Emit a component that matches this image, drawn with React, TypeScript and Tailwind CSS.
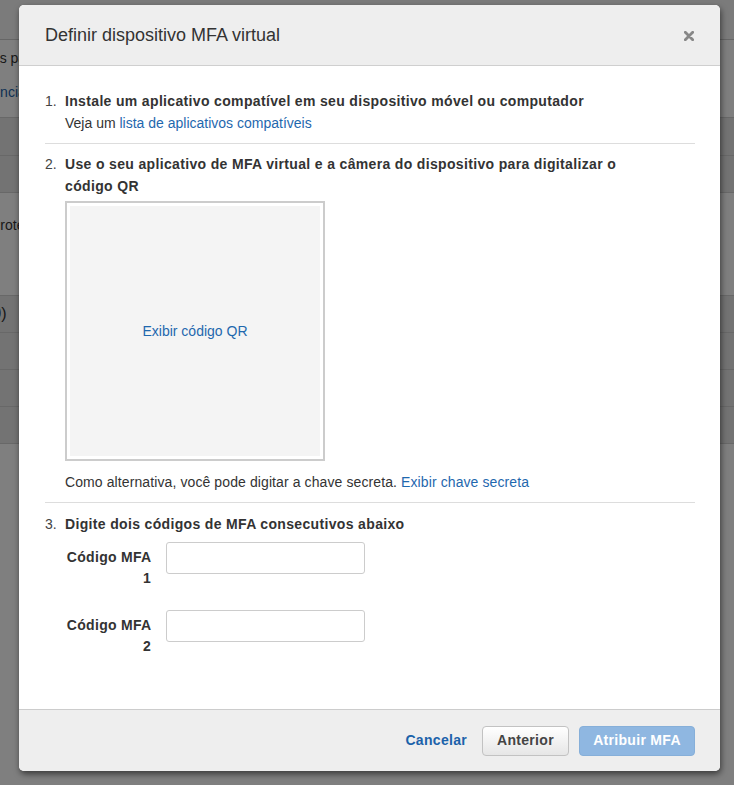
import React from "react";

const font = { fontFamily: '"Liberation Sans", Arial, Helvetica, sans-serif' };

function BgRow({ h, dark, children }: { h: string; dark?: boolean; children?: React.ReactNode }) {
  return (
    <div className={`${h} border-b border-[#d0d0d0] ${dark ? "bg-[#e6e6e6]" : "bg-white"} overflow-hidden`}>
      {children}
    </div>
  );
}

function Background() {
  return (
    <div className="bg-white w-full h-full">
      <div className="h-[40px] border-b border-[#cccccc] bg-[#f6f6f6]" />
      <div className="h-[78px] border-b border-[#d0d0d0] bg-white overflow-hidden">
        <div className="pt-[8px] text-[14px] leading-[20px] text-[#333] whitespace-nowrap -ml-[68px]">Dispositivos para</div>
        <div className="pt-[14px] text-[14px] leading-[20px] text-[#1a5fa8] whitespace-nowrap -ml-[31px]">Gerência</div>
      </div>
      <BgRow h="h-[38px]" dark />
      <BgRow h="h-[37px]" dark />
      <div className="h-[103px] border-b border-[#d0d0d0] bg-white overflow-hidden">
        <div className="pt-[22px] text-[14px] leading-[20px] text-[#333] whitespace-nowrap -ml-[9px]">Proteção</div>
      </div>
      <div className="h-[37px] border-b border-[#d0d0d0] bg-[#e6e6e6] overflow-hidden">
        <div className="pt-[8px] text-[16px] leading-[20px] text-[#333] whitespace-nowrap -ml-[13px]">(0)</div>
      </div>
      <BgRow h="h-[37px]" dark />
      <BgRow h="h-[37px]" dark />
      <BgRow h="h-[37px]" dark />
    </div>
  );
}

function Step({ n, children }: { n: string; children: React.ReactNode }) {
  return (
    <div className="flex">
      <div className="w-[20px] shrink-0 text-[14px] leading-[22px] text-[#444]">{n}</div>
      <div className="flex-1 min-w-0">{children}</div>
    </div>
  );
}

function MfaRow({ label, num, className }: { label: string; num: string; className?: string }) {
  return (
    <div className={`flex items-start ${className ?? ""}`}>
      <label className="w-[86px] shrink-0 pt-[5px] text-right text-[14px] leading-[21px] font-bold tracking-[0.3px] text-[#333]">
        {label} {num}
      </label>
      <input
        type="text"
        className="ml-[15px] w-[199px] h-[32px] rounded-[3px] border border-[#cccccc] bg-white outline-none"
      />
    </div>
  );
}

export default function App() {
  return (
    <div className="relative w-full h-[785px] overflow-hidden" style={font}>
      <Background />
      <div className="absolute inset-0 bg-black/50 pl-[19px] pt-[5px]">
        <div className="w-[701px] rounded-[5px] overflow-hidden bg-white shadow-[1px_3px_6px_rgba(0,0,0,0.55)]">
          {/* Header */}
          <div className="h-[61px] border-b border-[#cfcfcf] bg-[#eeeeee] flex items-center justify-between pl-[26px] pr-[26px]">
            <h2 className="text-[18px] leading-[24px] text-[#333] font-normal">Definir dispositivo MFA virtual</h2>
            <svg width="10" height="10" viewBox="0 0 10 10" className="mt-[1px]">
              <path d="M1.3 1.3 L8.7 8.7 M8.7 1.3 L1.3 8.7" stroke="#878787" strokeWidth="2.8" strokeLinecap="round" />
            </svg>
          </div>

          {/* Body */}
          <div className="pl-[26px] pr-[25px] pt-[24px] pb-[52px] text-[14px] text-[#333]">
            <div className="pb-[9px] border-b border-[#dddddd]">
              <Step n="1.">
                <p className="font-bold leading-[22px] tracking-[0.34px]">Instale um aplicativo compatível em seu dispositivo móvel ou computador</p>
                <p className="leading-[22px]">
                  Veja um <a className="text-[#1f68ae]">lista de aplicativos compatíveis</a>
                </p>
              </Step>
            </div>

            <div className="pt-[9px] pb-[9px] border-b border-[#dddddd]">
              <Step n="2.">
                <p className="font-bold leading-[22px] tracking-[0.34px] max-w-[580px]">
                  Use o seu aplicativo de MFA virtual e a câmera do dispositivo para digitalizar o código QR
                </p>
                <div className="mt-[4px] w-[260px] h-[260px] border-2 border-[#cccccc] bg-white p-[3px]">
                  <div className="w-full h-full bg-[#f4f4f4] flex items-center justify-center">
                    <a className="text-[#1f68ae] leading-[22px]">Exibir código QR</a>
                  </div>
                </div>
                <p className="mt-[10px] leading-[22px] tracking-[0.1px]">
                  Como alternativa, você pode digitar a chave secreta. <a className="text-[#1f68ae]">Exibir chave secreta</a>
                </p>
              </Step>
            </div>

            <div className="pt-[10px]">
              <Step n="3.">
                <p className="font-bold leading-[22px] tracking-[0.34px]">Digite dois códigos de MFA consecutivos abaixo</p>
              </Step>
              <MfaRow className="mt-[7px] ml-[20px]" label="Código MFA" num="1" />
              <MfaRow className="mt-[21px] ml-[20px]" label="Código MFA" num="2" />
            </div>
          </div>

          {/* Footer */}
          <div className="h-[62px] border-t border-[#cccccc] bg-[#eeeeee] flex items-center justify-end pr-[25px]">
            <button className="text-[14px] font-bold tracking-[0.3px] text-[#1b62aa] mr-[15px]">Cancelar</button>
            <button className="h-[30px] w-[87px] rounded-[4px] border border-[#c2c2c2] bg-linear-to-b from-white to-[#e6e6e6] text-[14px] font-bold tracking-[0.3px] text-[#444]">
              Anterior
            </button>
            <button className="ml-[10px] h-[30px] w-[116px] rounded-[4px] border border-[#86afd9] bg-[#8fb7e1] text-[14px] font-bold tracking-[0.3px] text-white">
              Atribuir MFA
            </button>
          </div>
        </div>
      </div>
    </div>
  );
}
